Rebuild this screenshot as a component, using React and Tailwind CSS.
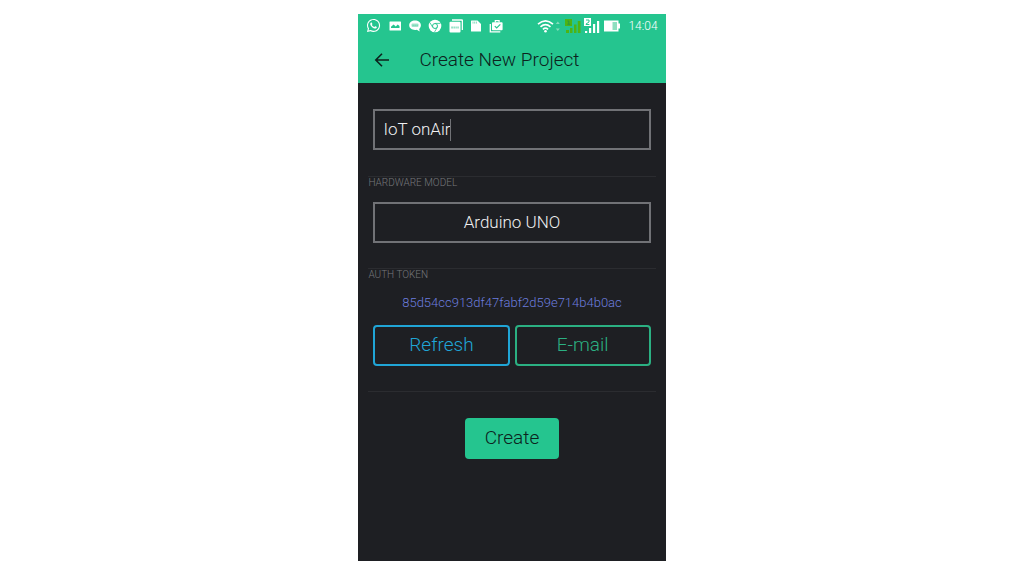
import React, { useState } from "react";
import { FaWhatsapp } from "react-icons/fa";

const NotificationIcons = () => (
  <div className="flex w-[47%] items-center justify-between" aria-hidden="true">
    <FaWhatsapp className="size-[15px]" />
    {/* Screenshot */}
    <svg viewBox="0 0 14 14" className="size-[14px]" fill="currentColor">
      <path
        fillRule="evenodd"
        d="M2 2.500h10.500q.5 0 .5.5v8q0 .5-.5.5H2q-.5 0-.5-.5V3q0-.5.5-.5ZM3 9h8.500V7L9.700 5.400 7.800 7.400 5.600 5.400 3 7.800Z"
      />
    </svg>
    {/* Messages */}
    <svg viewBox="0 0 14 14" className="size-[14px]">
      <path
        d="M7 1.600C3.800 1.600 1.200 3.600 1.200 6.300c0 2.700 2.600 4.700 5.800 4.700.6 0 1.200-.1 1.800-.2l2.900 1.700-.5-2.500c1-.9 1.700-2.200 1.700-3.700C12.900 3.600 10.200 1.600 7 1.600Z"
        fill="currentColor"
      />
      <rect x="3.500" y="4.600" width="7" height="3.400" rx="1" fill="#a5e5cd" />
      <path d="M4.600 6.300h1M6.600 6.300h1M8.600 6.300h1" stroke="#4fcfa3" strokeWidth="1" />
    </svg>
    {/* Chrome */}
    <svg viewBox="0 0 14 14" className="size-[14px]">
      <circle cx="7" cy="7" r="6.300" fill="currentColor" />
      <circle cx="7" cy="7" r="2.500" fill="none" stroke="#25c58f" strokeWidth="1" />
      <path d="M7 4.400h5.400M4.700 8.300 2 3.700M9.300 8.300l-2.700 4.600" stroke="#25c58f" strokeWidth=".8" />
    </svg>
    {/* Stacked cards */}
    <svg viewBox="0 0 14 14" className="size-[14px]">
      <path d="M3 1h9.500q1 0 1 1v9" fill="none" stroke="currentColor" strokeWidth="1.600" />
      <rect x="0.500" y="2.800" width="11" height="10.700" rx="1" fill="currentColor" />
      <path d="M2.300 8.500h1.500M4.500 8.500h1.300M6.500 8.500h1.200M8.400 8.500h1.300" stroke="#7cdab8" strokeWidth="2" />
    </svg>
    {/* SD card */}
    <svg viewBox="0 0 14 14" className="size-[14px]">
      <path d="M2.500 1.500h6l3.500 3.400v7.600H2.500q-.5 0-.5-.5V2q0-.5.5-.5Z" fill="currentColor" />
      <path d="M4 2.600v2M5.700 2.600v2M7.400 2.600v2" stroke="#7cdab8" strokeWidth=".9" />
    </svg>
    {/* Installed apps */}
    <svg viewBox="0 0 14 14" className="size-[14px]">
      <path d="M1.300 5v7.800h10" fill="none" stroke="currentColor" strokeWidth="1.300" />
      <path d="M6.300 3.500V1.700h3.800v1.800" fill="none" stroke="currentColor" strokeWidth="1.200" />
      <rect x="3" y="3.300" width="10.600" height="8" rx=".8" fill="currentColor" />
      <path d="m5.800 7.100 1.900 1.900 3.600-3.700" fill="none" stroke="#25c58f" strokeWidth="1.200" />
    </svg>
  </div>
);

const SystemIcons = () => (
  <div className="flex items-center gap-[3px]" aria-hidden="true">
    {/* Wi-Fi */}
    <svg viewBox="0 0 24 14" className="h-[14px] w-[24px]" fill="none" stroke="currentColor">
      <path d="M1 5.200q7.500-6.700 15 0M3.500 7.900q5-4.500 10 0M5.900 10.300q2.600-2.200 5.200 0" strokeWidth="1.600" />
      <circle cx="8.500" cy="12.200" r="1.300" fill="currentColor" stroke="none" />
      <path d="m18.800 5 2-2.500 2 2.500ZM18.800 9.500l2 2.500 2-2.500Z" fill="#83dcba" stroke="none" />
    </svg>
    {/* SIM 1 */}
    <svg viewBox="0 0 16 16" className="ml-[1px] size-[16px]" fill="#4eb414">
      <path d="M0 1h7v7H0ZM1 12h3v3H1ZM5 10h2.500v5H5ZM9 6.500h2.500V15H9ZM12.800 3h2.700v12h-2.700Z" />
      <path d="M2.500 3h1.300v3M2.300 6.300h3" fill="none" stroke="#25944c" strokeWidth=".9" />
    </svg>
    {/* SIM 2 */}
    <svg viewBox="0 0 16 16" className="size-[16px]" fill="currentColor">
      <path d="M0 0h7v8H0ZM1 13h2.200v2H1ZM5 10h2.200v5H5ZM9 6h2.200v9H9ZM13 3h2.200v12H13Z" />
      <path d="M2 2h3v2L2 6v.5h3.300" fill="none" stroke="#25c58f" strokeWidth="1" />
    </svg>
    {/* Battery */}
    <svg viewBox="0 0 17 12" className="ml-[1px] h-[12px] w-[17px]">
      <path d="M0 .5h14.500v3H16v5h-1.500v3H0Z" fill="currentColor" />
      <path d="M8.500 2h4.500v8H8.500Z" fill="#8edfc0" />
    </svg>
  </div>
);

const StatusBar = () => (
  <div className="flex h-[23px] items-center justify-between px-[8px] text-white">
    <NotificationIcons />
    <div className="flex items-center gap-[7px]">
      <SystemIcons />
      <time className="text-[12px] leading-[16px]">14:04</time>
    </div>
  </div>
);

const App = () => {
  const [name, setName] = useState("IoT onAir");
  const [model, setModel] = useState("Arduino UNO");

  return (
    <div className="flex min-h-screen justify-center bg-white pt-[14px] pb-[15px] font-['Roboto',sans-serif] font-light">
      <div className="flex w-[30%] min-w-[300px] flex-col bg-[#1e1f23]">
        <header className="bg-[#25c58f]">
          <StatusBar />
          <div className="flex h-[46px] items-center gap-[29px] pl-[16px] text-[#0c231d]">
            <button type="button" aria-label="Back">
              <svg viewBox="0 0 16 16" className="size-[16px]" fill="none" stroke="currentColor" strokeWidth="1.6">
                <path d="M15 8H2M8 1.800 1.800 8 8 14.200" />
              </svg>
            </button>
            <h1 className="text-[19px] leading-[24px]">Create New Project</h1>
          </div>
        </header>

        <main className="flex flex-1 flex-col px-[10px] pt-[26px]">
          <div className="mx-[5px] flex h-[41px] items-center border-2 border-[#717276] px-[8px] text-[17px] text-[#f0f0f2]">
            <input
              type="text"
              aria-label="Project name"
              value={name}
              onChange={(e) => setName(e.target.value)}
              className="field-sizing-content max-w-full outline-none"
            />
            {/* Text cursor */}
            <span className="h-[22px] w-px bg-[#717276]" />
          </div>

          <section className="mt-[26px] border-t border-[#2b2c30]">
            <label htmlFor="model" className="block text-[10px] leading-[12px] text-[#77787c]">
              HARDWARE MODEL
            </label>
            <div className="mt-[13px] px-[5px]">
              <select
                id="model"
                value={model}
                onChange={(e) => setModel(e.target.value)}
                className="block h-[41px] w-full appearance-none border-2 border-[#717276] bg-[#1e1f23] text-center text-[17px] text-[#f0f0f2] [text-align-last:center]"
              >
                <option>Arduino UNO</option>
              </select>
            </div>
          </section>

          <section className="mt-[25px] border-t border-[#2b2c30]">
            <h2 className="text-[10px] leading-[12px] text-[#77787c]">AUTH TOKEN</h2>
            <p className="mt-[12px] text-center text-[13px] leading-[20px] text-[#6c7dde]">
              85d54cc913df47fabf2d59e714b4b0ac
            </p>
            <div className="mt-[12px] grid grid-cols-2 gap-[5px] px-[5px]">
              <button type="button" className="h-[41px] rounded-[4px] border-2 border-[#20a5d6] text-[19px] text-[#20a5d6]">
                Refresh
              </button>
              <button type="button" className="h-[41px] rounded-[4px] border-2 border-[#2bb082] text-[19px] text-[#2bb082]">
                E-mail
              </button>
            </div>
          </section>

          <div className="mt-[25px] flex justify-center border-t border-[#2b2c30] pt-[26px]">
            <button type="button" className="h-[41px] rounded-[4px] bg-[#25c58f] px-[20px] text-[19px] text-[#0c231d]">
              Create
            </button>
          </div>
        </main>
      </div>
    </div>
  );
};

export default App;
